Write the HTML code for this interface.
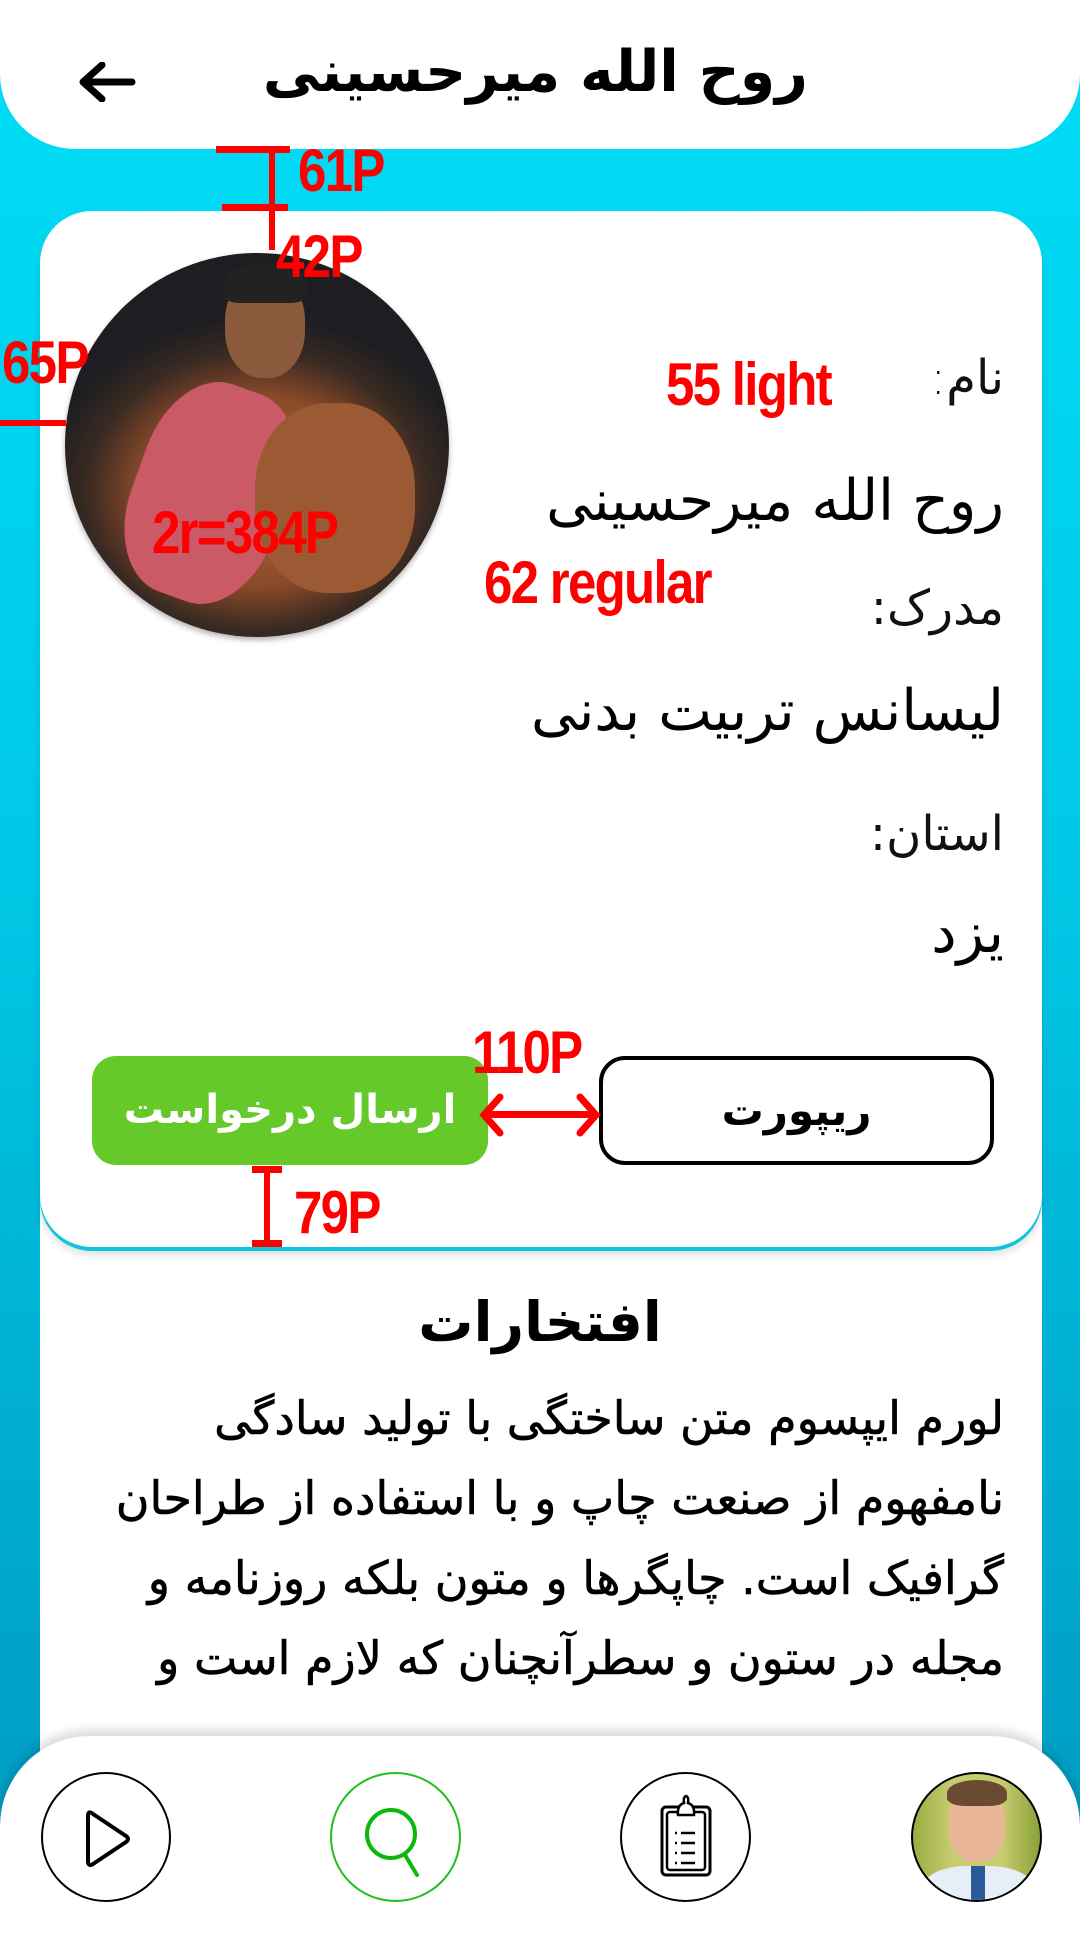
<!DOCTYPE html>
<html><head><meta charset="utf-8"><style>
*{margin:0;padding:0;box-sizing:border-box}
body{width:1080px;height:1920px;position:relative;overflow:hidden;background:linear-gradient(#00def7 0%,#00c8e6 45%,#0097c0 100%);font-family:"DejaVu Sans",sans-serif;}
.a{position:absolute}
.fa{direction:rtl;white-space:nowrap}
.red{color:#ff0000;font-family:"Liberation Sans",sans-serif;font-weight:bold;font-size:60px;letter-spacing:-2px;transform-origin:left top;transform:scaleX(0.85)}
.rl{background:#ff0000}
</style></head><body>
<div class="a" style="left:0;top:0;width:1080px;height:149px;background:#fff;border-radius:0 0 75px 75px"></div>
<div class="a fa" style="right:272px;top:32px;font-size:57px;font-weight:bold;color:#000;line-height:80px">روح الله میرحسینی</div>
<svg class="a" style="left:78px;top:62px" width="58" height="40" viewBox="0 0 58 40"><path d="M54 20H6M24 3L5 20L24 37" stroke="#000" stroke-width="7" fill="none" stroke-linecap="round" stroke-linejoin="round"/></svg>

<div class="a" style="left:40px;top:1200px;width:1002px;height:720px;background:#fff"></div>
<div class="a" style="left:40px;top:211px;width:1002px;height:1036px;background:#fff;border-radius:52px;box-shadow:0 4px 0 #11c3dc,0 8px 8px rgba(0,0,0,0.12)"></div>

<div class="a" style="left:65px;top:253px;width:384px;height:384px;border-radius:50%;overflow:hidden;background:radial-gradient(ellipse 55% 45% at 50% 62%,#b06a3e 0%,#8a4a28 55%,#3a2a22 80%,#1e1e22 100%);box-shadow:0 3px 6px rgba(0,0,0,.3)">
 <div class="a" style="left:160px;top:20px;width:80px;height:105px;border-radius:45%;background:#8b5a3c"></div>
 <div class="a" style="left:158px;top:10px;width:84px;height:40px;border-radius:50% 50% 20% 20%;background:#222"></div>
 <div class="a" style="left:70px;top:130px;width:150px;height:220px;border-radius:40%;background:#c95a66;transform:rotate(20deg)"></div>
 <div class="a" style="left:190px;top:150px;width:160px;height:190px;border-radius:45%;background:#9c5a34"></div>
</div>

<div class="a fa" style="right:76px;top:350px;font-size:48px;font-weight:300;color:#111">نام:</div>
<div class="a fa" style="right:76px;top:468px;font-size:57px;color:#000">روح الله میرحسینی</div>
<div class="a fa" style="right:76px;top:580px;font-size:48px;color:#111">مدرک:</div>
<div class="a fa" style="right:76px;top:678px;font-size:57px;color:#000">لیسانس تربیت بدنی</div>
<div class="a fa" style="right:76px;top:806px;font-size:48px;color:#111">استان:</div>
<div class="a fa" style="right:76px;top:900px;font-size:57px;color:#000">یزد</div>

<div class="a fa" style="left:92px;top:1056px;width:396px;height:109px;background:#66c92a;border-radius:24px;color:#fff;font-size:40px;font-weight:bold;text-align:center;line-height:109px">ارسال درخواست</div>
<div class="a fa" style="left:599px;top:1056px;width:395px;height:109px;border:4px solid #000;border-radius:26px;color:#000;font-size:42px;font-weight:bold;text-align:center;line-height:101px">ریپورت</div>

<div class="a fa" style="left:0;width:1080px;text-align:center;top:1290px;font-size:55px;font-weight:bold;color:#000">افتخارات</div>
<div class="a" style="right:76px;top:1378px;direction:rtl;text-align:right;font-size:46px;line-height:80px;color:#000;white-space:nowrap;-webkit-text-stroke:0.6px #000">لورم ایپسوم متن ساختگی با تولید سادگی<br>نامفهوم از صنعت چاپ و با استفاده از طراحان<br>گرافیک است. چاپگرها و متون بلکه روزنامه و<br>مجله در ستون و سطرآنچنان که لازم است و</div>

<div class="a" style="left:0;top:1736px;width:1080px;height:200px;background:#fff;border-radius:90px 90px 0 0;box-shadow:0 -6px 10px rgba(0,0,0,0.15)"></div>
<div class="a" style="left:41px;top:1772px;width:130px;height:130px;border:2px solid #000;border-radius:50%"></div>
<svg class="a" style="left:80px;top:1808px" width="56" height="60" viewBox="0 0 56 60"><path d="M8 8Q8 2 13 6L46 28Q50 31 46 34L13 56Q8 59 8 53Z" stroke="#000" stroke-width="4" fill="none" stroke-linejoin="round"/></svg>
<div class="a" style="left:330px;top:1772px;width:131px;height:130px;border:2px solid #1fbf1f;border-radius:50%"></div>
<svg class="a" style="left:355px;top:1800px" width="80" height="80" viewBox="0 0 80 80"><circle cx="36" cy="34" r="24" stroke="#0cb80c" stroke-width="4" fill="none"/><path d="M50 55L62 75" stroke="#0cb80c" stroke-width="4" stroke-linecap="round"/></svg>
<div class="a" style="left:620px;top:1772px;width:131px;height:130px;border:2px solid #000;border-radius:50%"></div>
<svg class="a" style="left:650px;top:1785px" width="70" height="100" viewBox="0 0 70 100"><rect x="12" y="22" width="48" height="68" rx="4" stroke="#000" stroke-width="3" fill="none"/><rect x="17" y="27" width="38" height="58" rx="3" stroke="#000" stroke-width="2.5" fill="none"/><path d="M28 30Q27 20 34 18Q33 12 36 11Q39 12 38 18Q45 20 44 30Z" stroke="#000" stroke-width="2.5" fill="#fff"/><path d="M25 48h2M31 48h14M25 58h2M31 58h14M25 68h2M31 68h14M25 78h2M31 78h14" stroke="#000" stroke-width="2.5"/></svg>
<div class="a" style="left:911px;top:1772px;width:131px;height:130px;border:2px solid #000;border-radius:50%;overflow:hidden;background:linear-gradient(90deg,#9aab40,#c8cc70 30%,#c8cc70 70%,#8aa23a)">
 <div class="a" style="left:36px;top:14px;width:56px;height:74px;border-radius:45%;background:#e9b69a"></div>
 <div class="a" style="left:34px;top:6px;width:60px;height:26px;border-radius:50% 50% 30% 30%;background:#6a4a32"></div>
 <div class="a" style="left:8px;top:92px;width:114px;height:60px;border-radius:40% 40% 0 0;background:#e6eef8"></div>
 <div class="a" style="left:58px;top:92px;width:14px;height:45px;background:#2a5a9a"></div>
</div>

<div class="a rl" style="left:216px;top:146px;width:74px;height:7px"></div>
<div class="a rl" style="left:222px;top:204px;width:66px;height:7px"></div>
<div class="a rl" style="left:269px;top:150px;width:6px;height:100px"></div>
<div class="a red" style="left:298px;top:136px">61P</div>
<div class="a red" style="left:276px;top:222px">42P</div>
<div class="a red" style="left:2px;top:328px">65P</div>
<div class="a rl" style="left:0;top:420px;width:66px;height:6px"></div>
<div class="a red" style="left:666px;top:350px">55 light</div>
<div class="a red" style="left:152px;top:498px">2r=384P</div>
<div class="a red" style="left:484px;top:548px">62 regular</div>
<div class="a red" style="left:472px;top:1018px">110P</div>
<div class="a rl" style="left:484px;top:1111px;width:112px;height:7px"></div>
<svg class="a" style="left:478px;top:1093px" width="124" height="44"><path d="M22 4L6 22L22 40M102 4L118 22L102 40" stroke="#f00" stroke-width="7" fill="none" stroke-linecap="round"/></svg>
<div class="a red" style="left:294px;top:1178px">79P</div>
<div class="a rl" style="left:264px;top:1168px;width:6px;height:78px"></div>
<div class="a rl" style="left:252px;top:1166px;width:30px;height:7px"></div>
<div class="a rl" style="left:252px;top:1240px;width:30px;height:7px"></div>
</body></html>
